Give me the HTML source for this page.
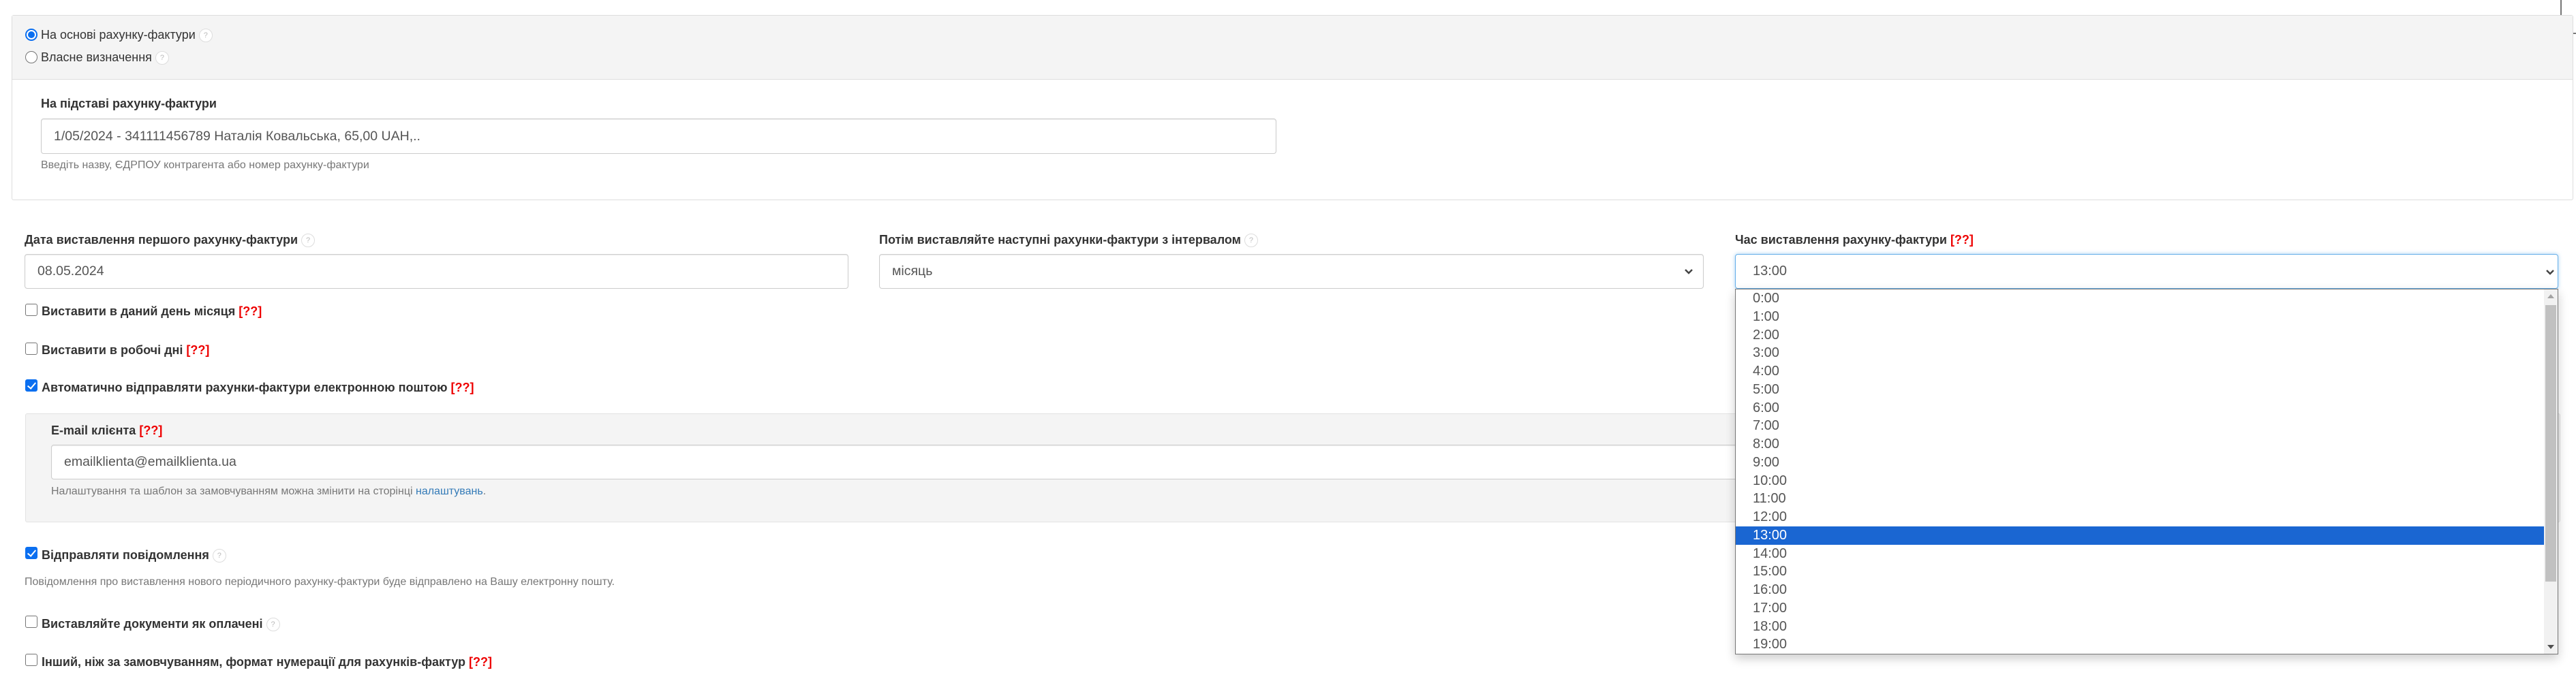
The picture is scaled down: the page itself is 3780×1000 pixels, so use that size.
<!DOCTYPE html>
<html><head><meta charset="utf-8"><style>
*{box-sizing:border-box;margin:0;padding:0}
body{width:3780px;height:1000px;background:#fff;font-family:"Liberation Sans",Arial,sans-serif;font-size:18px;color:#333;position:relative;overflow:hidden}
.a{position:absolute}
.lbl{position:absolute;font-weight:bold;white-space:nowrap;line-height:20px;font-size:18px}
.txt{position:absolute;white-space:nowrap;line-height:20px}
.r{color:#e00;font-weight:bold}
.inp{position:absolute;border:1px solid #ccc;border-radius:4px;background:#fff;box-shadow:inset 0 1px 1px rgba(0,0,0,.075);padding-left:18px;display:flex;align-items:center;font-size:19.5px;color:#555}
.help{position:absolute;font-size:16px;color:#777;white-space:nowrap}
.q{display:inline-block;width:20px;height:20px;border:1px solid #ddd;border-radius:50%;font-size:11px;color:#bbb;text-align:center;line-height:18px;vertical-align:middle;margin-left:5px;background:#fff;font-weight:normal}
.cb{position:absolute;width:18px;height:18px;border:1.5px solid #767676;border-radius:3px;background:#fff}
.cb.on{background:#0b6ff0;border-color:#0b6ff0}
.cb.on::after{content:"";position:absolute;left:5px;top:1px;width:5px;height:10px;border:solid #fff;border-width:0 2.5px 2.5px 0;transform:rotate(40deg)}
.rad{position:absolute;width:18px;height:18px;border:1.5px solid #767676;border-radius:50%;background:#fff}
.rad.on{border:2px solid #0b6ff0}
.rad.on::after{content:"";position:absolute;left:2px;top:2px;width:10px;height:10px;border-radius:50%;background:#0b6ff0}
.opt{height:26.75px;line-height:26.75px;padding-left:25px;font-size:20px;color:#555}
.opt.sel{background:#1a66d2;color:#fff}
</style></head><body>
<div class="a" style="left:3757px;top:-4px;width:30px;height:54px;border:2px solid #777;border-radius:0 0 0 8px;background:#fff"></div>

<div class="a" style="left:17px;top:22px;width:3759px;height:272px;border:1px solid #ddd;border-radius:3px;background:#fff"></div>
<div class="a" style="left:18px;top:23px;width:3757px;height:94px;background:#f4f4f4;border-bottom:1px solid #ddd"></div>
<div class="rad on" style="left:37px;top:42px"></div>
<div class="txt" style="left:60px;top:41px">На основі рахунку-фактури<span class="q">?</span></div>
<div class="rad" style="left:37px;top:75px"></div>
<div class="txt" style="left:60px;top:74px">Власне визначення<span class="q">?</span></div>
<div class="lbl" style="left:60px;top:142px">На підставі рахунку-фактури</div>
<div class="inp" style="left:60px;top:174px;width:1813px;height:52px">1/05/2024 - 341111456789 Наталія Ковальська, 65,00 UAH,..</div>
<div class="help" style="left:60px;top:234px">Введіть назву, ЄДРПОУ контрагента або номер рахунку-фактури</div>

<div class="lbl" style="left:36px;top:342px">Дата виставлення першого рахунку-фактури<span class="q">?</span></div>
<div class="inp" style="left:36px;top:373px;width:1209px;height:51px">08.05.2024</div>
<div class="lbl" style="left:1290px;top:342px">Потім виставляйте наступні рахунки-фактури з інтервалом<span class="q">?</span></div>
<div class="inp" style="left:1290px;top:373px;width:1210px;height:51px">місяць<svg style="position:absolute;right:14px;top:20px" width="14" height="10"><path d="M2 2 L7 7 L12 2" stroke="#444" stroke-width="2.5" fill="none"/></svg></div>
<div class="lbl" style="left:2546px;top:342px">Час виставлення рахунку-фактури <span class="r">[??]</span></div>
<div class="inp" style="left:2546px;top:373px;width:1208px;height:51px;border-color:#66afe9;box-shadow:0 0 6px rgba(102,175,233,.6);padding-left:25px;font-size:20px">13:00<svg style="position:absolute;right:4px;top:21px" width="14" height="10"><path d="M2 2 L7 7 L12 2" stroke="#444" stroke-width="2.5" fill="none"/></svg></div>

<div class="cb" style="left:37px;top:446px"></div>
<div class="lbl" style="left:61px;top:447px">Виставити в даний день місяця <span class="r">[??]</span></div>
<div class="cb" style="left:37px;top:503px"></div>
<div class="lbl" style="left:61px;top:504px">Виставити в робочі дні <span class="r">[??]</span></div>
<div class="cb on" style="left:37px;top:557px"></div>
<div class="lbl" style="left:61px;top:559px">Автоматично відправляти рахунки-фактури електронною поштою <span class="r">[??]</span></div>

<div class="a" style="left:37px;top:607px;width:3720px;height:160px;background:#f4f4f4;border:1px solid #e3e3e3;border-radius:3px"></div>
<div class="lbl" style="left:75px;top:622px">E-mail клієнта <span class="r">[??]</span></div>
<div class="inp" style="left:75px;top:653px;width:3660px;height:51px">emailklienta@emailklienta.ua</div>
<div class="help" style="left:75px;top:713px">Налаштування та шаблон за замовчуванням можна змінити на сторінці <span style="color:#337ab7">налаштувань</span>.</div>

<div class="cb on" style="left:37px;top:803px"></div>
<div class="lbl" style="left:61px;top:805px">Відправляти повідомлення<span class="q">?</span></div>
<div class="help" style="left:36px;top:846px">Повідомлення про виставлення нового періодичного рахунку-фактури буде відправлено на Вашу електронну пошту.</div>
<div class="cb" style="left:37px;top:904px"></div>
<div class="lbl" style="left:61px;top:906px">Виставляйте документи як оплачені<span class="q">?</span></div>
<div class="cb" style="left:37px;top:960px"></div>
<div class="lbl" style="left:61px;top:962px">Інший, ніж за замовчуванням, формат нумерації для рахунків-фактур <span class="r">[??]</span></div>

<div class="a" style="left:2546px;top:424px;width:1208px;height:537px;border:1px solid #767676;background:#fff;box-shadow:0 6px 14px rgba(0,0,0,.2);overflow:hidden">
<div style="width:1186px">
<div class="opt">0:00</div><div class="opt">1:00</div><div class="opt">2:00</div><div class="opt">3:00</div><div class="opt">4:00</div><div class="opt">5:00</div><div class="opt">6:00</div><div class="opt">7:00</div><div class="opt">8:00</div><div class="opt">9:00</div><div class="opt">10:00</div><div class="opt">11:00</div><div class="opt">12:00</div><div class="opt sel">13:00</div><div class="opt">14:00</div><div class="opt">15:00</div><div class="opt">16:00</div><div class="opt">17:00</div><div class="opt">18:00</div><div class="opt">19:00</div>
</div>
<div class="a" style="right:0;top:0;width:20px;height:535px;background:#f1f1f1"></div>
<svg class="a" style="right:5px;top:6px" width="10" height="8"><path d="M0 7 L5 1 L10 7Z" fill="#a3a3a3"/></svg>
<div class="a" style="right:2px;top:23px;width:16px;height:406px;background:#c1c1c1"></div>
<svg class="a" style="right:5px;bottom:6px" width="10" height="8"><path d="M0 1 L5 7 L10 1Z" fill="#505050"/></svg>
</div>
</body></html>
